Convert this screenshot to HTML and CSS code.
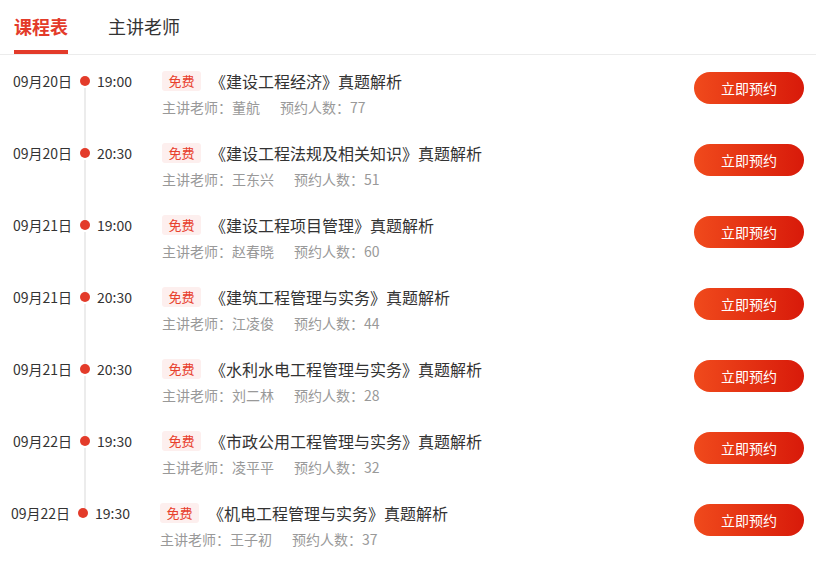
FILE: index.html
```html
<!doctype html>
<html>
<head>
<meta charset="utf-8">
<title>课程表</title>
<link rel="stylesheet" href="styles.css">
</head>
<body>
<div class="tabs">
	<a class="tab on" href="javascript:void(0)">课程表</a>
	<a class="tab" href="javascript:void(0)">主讲老师</a>
</div>
<ul class="list">
	<li class="row">
		<span class="date">09月20日</span><span class="dot"></span><span class="time">19:00</span>
		<div class="info">
			<p class="title"><span class="free">免费</span>《建设工程经济》真题解析</p>
			<p class="sub"><span>主讲老师：董航</span><span>预约人数：77</span></p>
		</div>
		<a class="btn" href="javascript:void(0)">立即预约</a>
	</li>
	<li class="row">
		<span class="date">09月20日</span><span class="dot"></span><span class="time">20:30</span>
		<div class="info">
			<p class="title"><span class="free">免费</span>《建设工程法规及相关知识》真题解析</p>
			<p class="sub"><span>主讲老师：王东兴</span><span>预约人数：51</span></p>
		</div>
		<a class="btn" href="javascript:void(0)">立即预约</a>
	</li>
	<li class="row">
		<span class="date">09月21日</span><span class="dot"></span><span class="time">19:00</span>
		<div class="info">
			<p class="title"><span class="free">免费</span>《建设工程项目管理》真题解析</p>
			<p class="sub"><span>主讲老师：赵春晓</span><span>预约人数：60</span></p>
		</div>
		<a class="btn" href="javascript:void(0)">立即预约</a>
	</li>
	<li class="row">
		<span class="date">09月21日</span><span class="dot"></span><span class="time">20:30</span>
		<div class="info">
			<p class="title"><span class="free">免费</span>《建筑工程管理与实务》真题解析</p>
			<p class="sub"><span>主讲老师：江凌俊</span><span>预约人数：44</span></p>
		</div>
		<a class="btn" href="javascript:void(0)">立即预约</a>
	</li>
	<li class="row">
		<span class="date">09月21日</span><span class="dot"></span><span class="time">20:30</span>
		<div class="info">
			<p class="title"><span class="free">免费</span>《水利水电工程管理与实务》真题解析</p>
			<p class="sub"><span>主讲老师：刘二林</span><span>预约人数：28</span></p>
		</div>
		<a class="btn" href="javascript:void(0)">立即预约</a>
	</li>
	<li class="row">
		<span class="date">09月22日</span><span class="dot"></span><span class="time">19:30</span>
		<div class="info">
			<p class="title"><span class="free">免费</span>《市政公用工程管理与实务》真题解析</p>
			<p class="sub"><span>主讲老师：凌平平</span><span>预约人数：32</span></p>
		</div>
		<a class="btn" href="javascript:void(0)">立即预约</a>
	</li>
	<li class="row last">
		<span class="date">09月22日</span><span class="dot"></span><span class="time">19:30</span>
		<div class="info">
			<p class="title"><span class="free">免费</span>《机电工程管理与实务》真题解析</p>
			<p class="sub"><span>主讲老师：王子初</span><span>预约人数：37</span></p>
		</div>
		<a class="btn" href="javascript:void(0)">立即预约</a>
	</li>
</ul>
</body>
</html>
```

FILE: styles.css
```css
*{margin:0;padding:0;box-sizing:border-box;}
a{text-decoration:none;color:#333;}
ul,li{list-style:none;}
body{width:816px;background:#fff;color:#333;font-size:14px;font-family:"Microsoft YaHei","Noto Sans CJK SC",sans-serif;}

.tabs{display:flex;gap:40px;height:55px;padding-left:14px;border-bottom:1px solid #ececec;}
.tab{height:54px;line-height:52px;font-size:18px;color:#333;}
.tab.on{color:#e33b2a;font-weight:bold;border-bottom:4px solid #e33b2a;}

.row{display:flex;align-items:flex-start;height:72px;padding:16px 12px 0 13px;}
.row.last{padding-left:11px;}
.date,.time{line-height:20px;font-size:14px;color:#333;}
.date{width:67px;}
.dot{position:relative;width:10px;height:10px;margin-top:5px;border-radius:50%;background:#e33b2a;}
.dot:after{content:"";position:absolute;left:4px;top:12px;width:2px;height:68px;background:#ececec;}
.last .dot:after{display:none;}
.time{width:65px;margin-left:7px;}

.info{flex:1;}
.title{display:flex;align-items:center;height:20px;font-size:16px;color:#333;}
.free{width:39px;height:20px;line-height:20px;margin-right:9px;border-radius:3px;background:#fdefee;color:#e8402c;font-size:13px;text-align:center;}
.sub{display:flex;gap:20px;margin-top:6px;line-height:20px;font-size:14px;color:#999;}

.btn{width:110px;height:32px;line-height:32px;margin-top:1px;border-radius:16px;background:linear-gradient(90deg,#f04a1c,#d81a0a);color:#fff;font-size:14px;text-align:center;}
```
